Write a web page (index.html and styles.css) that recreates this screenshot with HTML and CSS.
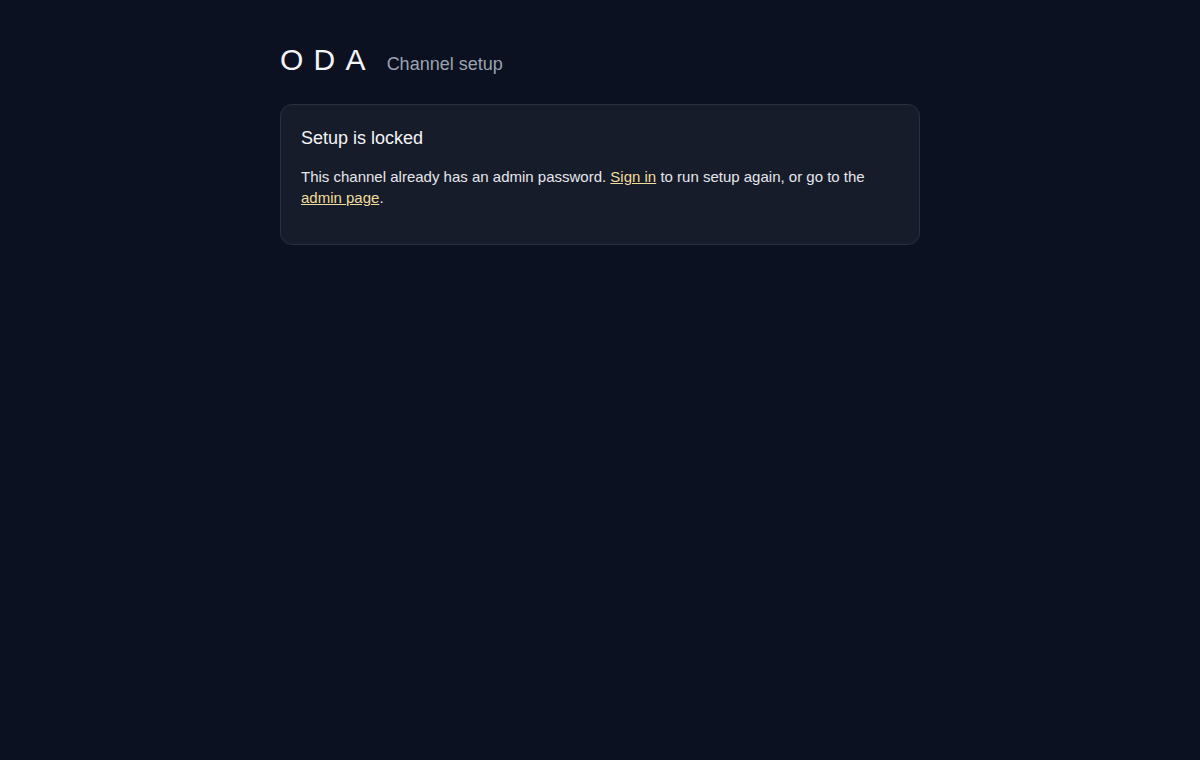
FILE: index.html
```html
<!DOCTYPE html>
<html lang="en">
<head>
    <meta charset="UTF-8">
    <meta name="viewport" content="width=device-width, initial-scale=1.0">
    <title>ODA - Channel setup</title>
    <link rel="stylesheet" href="styles.css">
</head>
<body>
    <div class="container">
        <header class="header">
            <span class="logo">ODA</span>
            <span class="subtitle">Channel setup</span>
        </header>

        <div class="card">
            <h2>Setup is locked</h2>
            <p>This channel already has an admin password. <a href="#">Sign in</a> to run setup again, or go to the <a href="#">admin page</a>.</p>
        </div>
    </div>
</body>
</html>
```

FILE: styles.css
```css
body {
    font-family: "Liberation Sans", Arial, sans-serif;
    background-color: #0b1120;
    color: #e5e7eb;
    margin: 0;
}

.container {
    width: 640px;
    margin: 0 auto;
    padding-top: 43px;
}

.header {
    display: flex;
    align-items: baseline;
    gap: 11px;
    margin-bottom: 27px;
}

.logo {
    font-size: 30px;
    letter-spacing: 0.34em;
    color: #f3f4f6;
}

.subtitle {
    font-size: 18px;
    color: #9ca3af;
}

.card {
    background-color: #171c2a;
    border: 1px solid #293040;
    border-radius: 12px;
    padding: 23px 20px 20px;
}

.card h2 {
    font-size: 18px;
    font-weight: normal;
    color: #f3f4f6;
    margin: 0 0 17px;
}

.card p {
    font-size: 15px;
    line-height: 21px;
    margin: 0 0 16px;
}

.card a {
    color: #f0dc9c;
}
```
